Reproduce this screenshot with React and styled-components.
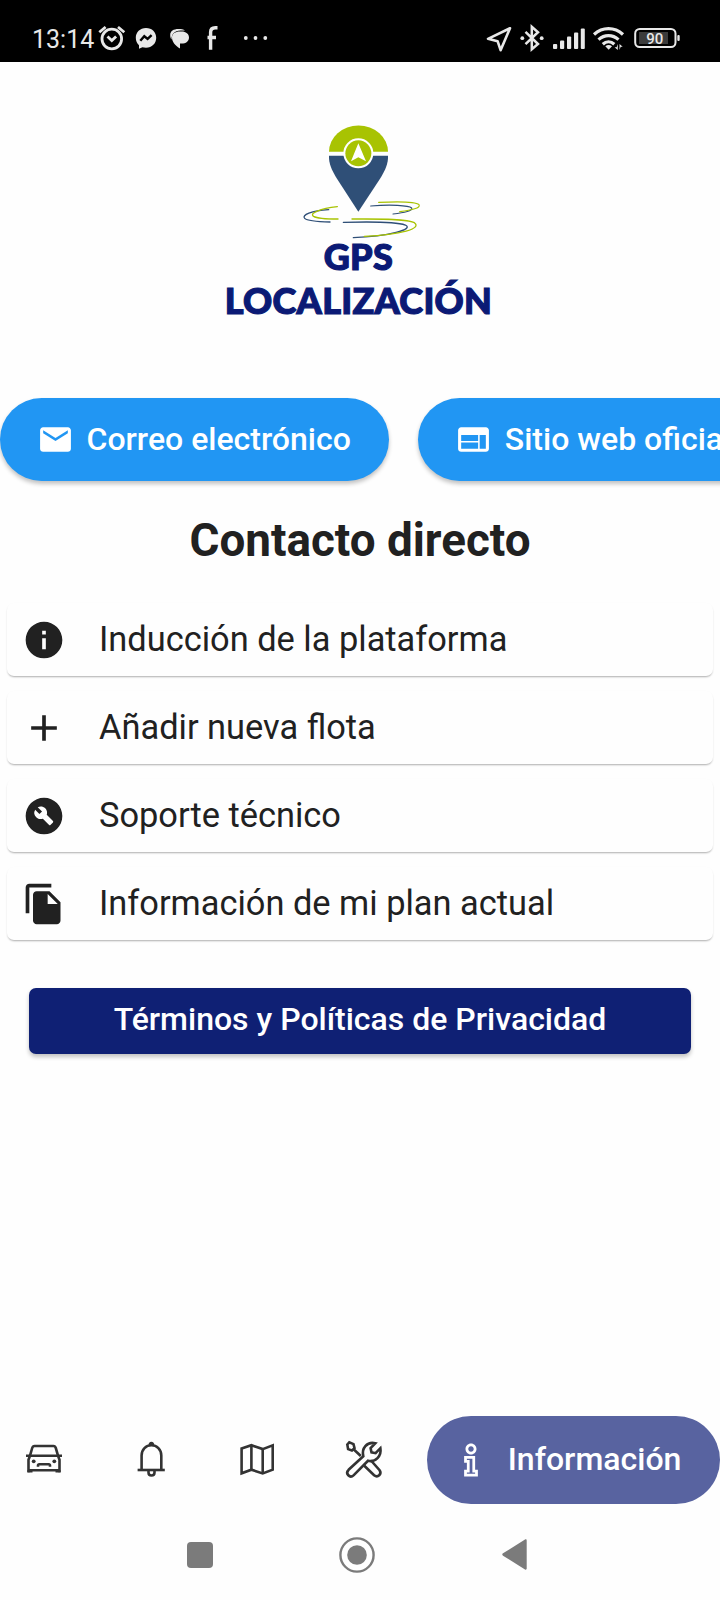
import styled, { createGlobalStyle } from "styled-components";
import {
  MdAdd,
  MdBuildCircle,
  MdEmail,
  MdFileCopy,
  MdInfo,
  MdWeb,
} from "react-icons/md";
import { LiaInfoSolid } from "react-icons/lia";

const colors = {
  background: "#fefefe",
  black: "#212121",
  white: "#fff",
  blue: "#2196f3",
  navy: "#0f2074",
  indigo: "#5863a0",
  logoNavy: "#0b1a75",
  lime: "#a8c302",
  steel: "#2f4f77",
  status: "#e8e8e8",
  gray: "#7b7b7b",
};

const GlobalStyle = createGlobalStyle`
  * {
    box-sizing: border-box;
  }

  body {
    margin: 0;
    background-color: ${colors.background};
    color: ${colors.black};
    font-family: Roboto, "Liberation Sans", sans-serif;
  }

  button {
    border: none;
    font-family: inherit;
    margin: 0;
    padding: 0;
  }

  svg {
    display: block;
    flex-shrink: 0;
  }
`;

const Screen = styled.div`
  display: flex;
  flex-direction: column;
  width: 720px;
  height: 1600px;
  overflow: hidden;
`;

const StatusBar = styled.header`
  background-color: #000;
  color: ${colors.status};
  display: flex;
  align-items: center;
  justify-content: space-between;
  height: 62px;
  padding: 14px 39px 0 32px;
`;

const StatusGroup = styled.div`
  display: flex;
  align-items: center;
`;

const Clock = styled.span`
  font-size: 25px;
  line-height: 28px;
  width: 66px;
  padding-top: 3px;
`;

const Logo = styled.div`
  display: flex;
  flex-direction: column;
  align-items: center;
  height: 336px;
  padding: 62px 3px 0 0;
`;

const LogoText = styled.div`
  color: ${colors.logoNavy};
  font-family: Lato, sans-serif;
  font-size: 36px;
  font-weight: 900;
  letter-spacing: ${(props) => props.$spacing};
  line-height: 44px;
  margin-top: ${(props) => props.$top || "0"};
  -webkit-text-stroke: 1.2px ${colors.logoNavy};
`;

const Links = styled.div`
  display: flex;
  gap: 29px;
  height: 83px;
`;

const LinkButton = styled.button`
  background-color: ${colors.blue};
  border-radius: 42px;
  box-shadow: 0 3px 4px rgba(0, 0, 0, 0.24);
  color: ${colors.white};
  cursor: pointer;
  display: flex;
  align-items: center;
  flex-shrink: 0;
  font-size: 32px;
  font-weight: 500;
  gap: 12.5px;
  height: 83px;
  padding: 0 38.5px 0 37px;
  white-space: nowrap;
`;

// lifts a label onto the optical centre of its icon
const Label = styled.span`
  padding-bottom: 2px;
`;

const Heading = styled.h1`
  font-size: 45.8px;
  font-weight: 700;
  line-height: 54px;
  margin: 33px 0 0;
  text-align: center;
`;

const List = styled.ul`
  display: flex;
  flex-direction: column;
  gap: 15px;
  list-style: none;
  margin: 35px 7px 0;
  padding: 0;
`;

const ListItem = styled.li`
  background-color: ${colors.background};
  border-radius: 7px;
  box-shadow: 0 2px 2px -1px rgba(0, 0, 0, 0.25),
    0 1px 2px rgba(0, 0, 0, 0.08);
  display: flex;
  align-items: center;
  font-size: 34.4px;
  gap: 33px;
  height: 73px;
  padding: 0 15px;
`;

const PrivacyButton = styled.button`
  background-color: ${colors.navy};
  border-radius: 7px;
  box-shadow: 0 3px 4px rgba(0, 0, 0, 0.24);
  color: ${colors.white};
  cursor: pointer;
  font-size: 32px;
  font-weight: 500;
  height: 66px;
  line-height: 63px;
  margin: 48px 29px 0;
  padding-bottom: 3px;
`;

const TabBar = styled.nav`
  display: flex;
  align-items: center;
  height: 88px;
  margin-top: auto;
`;

const Tab = styled.button`
  background-color: ${(props) =>
    props.$active ? colors.indigo : "transparent"};
  border-radius: 44px;
  color: ${(props) => (props.$active ? colors.white : "#333")};
  cursor: pointer;
  display: flex;
  align-items: center;
  font-size: 32px;
  font-weight: 500;
  gap: 15px;
  height: 88px;
  padding-left: 22px;
  width: ${(props) => (props.$active ? "293px" : "106.7px")};
`;

const SystemBar = styled.footer`
  display: flex;
  align-items: center;
  justify-content: space-between;
  height: 96px;
  padding: 5px 193px 0 187px;
`;

function OutlineIcon({ children }) {
  return (
    <svg
      width="44"
      height="44"
      viewBox="0 0 44 44"
      fill="none"
      stroke="currentColor"
      strokeWidth="2.6"
    >
      {children}
    </svg>
  );
}

function CarIcon() {
  return (
    <OutlineIcon>
      <path d="M4 17.700h36" />
      <path d="M8 17.700l2.200-7.700c.4-1.300 1-2 2.300-2h19c1.300 0 1.900.7 2.300 2L36 17.700" />
      <path d="M8 17.700l-1.500 4v12.600M36 17.700l1.500 4v12.600" />
      <path d="M6.500 32.200h31M5.500 33.300h5M33.500 33.300h5" />
      <path d="M16 28.700v-1.200c0-.9.4-1.300 1.300-1.300h9.400c.9 0 1.300.4 1.300 1.300v1.200" />
      <circle cx="11.700" cy="23.300" r="1.900" fill="currentColor" stroke="none" />
      <circle cx="32.300" cy="23.300" r="1.900" fill="currentColor" stroke="none" />
    </OutlineIcon>
  );
}

function BellIcon() {
  return (
    <OutlineIcon>
      <path d="M8.600 32h27.200" />
      <path d="M12.600 32V17.500C12.600 11.500 17 7.300 22.400 7.300s9.900 4.200 9.900 10.200V32" />
      <path d="M19.500 7.500c0-2.500 1-3.700 2.900-3.700s2.900 1.200 2.900 3.700z" fill="currentColor" stroke="none" />
      <path d="M19.500 32v2.500c0 4 6 4 6 0V32" />
    </OutlineIcon>
  );
}

function MapIcon() {
  return (
    <OutlineIcon>
      <path d="M6.600 10.500L16.400 7.200l11.300 3.900L37.700 7.300v24.400l-10 3.700-11.300-3.700-9.800 3.600z" />
      <path d="M16.400 7.200v24.500M27.700 11.100v24.300" />
    </OutlineIcon>
  );
}

function ToolsIcon() {
  return (
    <OutlineIcon>
      <path d="M5.300 6.500l2-2.200 4.200 1.800 1 4-2.600 2.400-3.800-1.400z" />
      <path d="M11.300 11l7.500 7" />
      <path d="M21.300 18.200L6.600 31.800c-3.700 3.800 1.200 9 5.200 5.300L26 22.800c7.500 1.700 13.700-4.600 12.400-12.600l-4.800 5-4.100-.8-.9-4.300 4.700-4.900c-8.500-1.800-14 5-12 13z" />
      <path d="M22.300 27.700l9.800 9.500c3.800 3 8-1.200 5.500-5L29 22.500" />
    </OutlineIcon>
  );
}

const links = [
  { label: "Correo electrónico", Icon: MdEmail },
  { label: "Sitio web oficial", Icon: MdWeb },
];

const contacts = [
  { label: "Inducción de la plataforma", Icon: MdInfo },
  { label: "Añadir nueva flota", Icon: MdAdd },
  { label: "Soporte técnico", Icon: MdBuildCircle },
  { label: "Información de mi plan actual", Icon: MdFileCopy },
];

const tabs = [
  { id: "vehicles", Icon: CarIcon },
  { id: "alerts", Icon: BellIcon },
  { id: "map", Icon: MapIcon },
  { id: "tools", Icon: ToolsIcon },
  { id: "info", Icon: LiaInfoSolid, label: "Información" },
];

function NotificationIcons() {
  return (
    <svg width="172" height="28" viewBox="98 24 172 28" fill={colors.status}>
      {/* alarm */}
      <g fill="none" stroke={colors.status} strokeWidth="2.8">
        <circle cx="111.8" cy="39" r="9.8" />
        <path d="M107.500 36.500l4.300 4 4.300-4" />
        <path d="M99.300 32.300l6.300-5.300M124.300 32.300l-6.300-5.300" />
      </g>
      {/* messenger */}
      <path d="M146 28c-6 0-10.200 4.300-10.200 9.800 0 3 1.200 5.600 3.200 7.400v3.600l3.400-1.500c1.100.3 2.300.5 3.600.5 6 0 10.200-4.400 10.200-10S152 28 146 28z" />
      <path
        d="M140.300 40.800l4-4.600 3.300 2.700 4-3.800"
        fill="none"
        stroke="#000"
        strokeWidth="2.400"
      />
      {/* chat */}
      <path d="M178.500 29c-5 0-8.300 2-8.300 6 0 2 .6 3.600 1.300 4.600 0-6 3-9 9-9.200h4.500c-1.500-1-4-1.400-6.500-1.400z" />
      <path d="M180 31.400h1.500c4.500 0 7.500 2.500 7.500 6s-3 6.200-7.500 6.200h-1.500v5c-4.500-2.500-8-6.500-8-11 0-4 3-6.200 8-6.200z" />
      {/* facebook */}
      <path
        d="M217.500 27.800h-2.200c-3 0-4.700 1.500-4.700 4.500v17.500M207.500 37.500h8.500"
        fill="none"
        stroke={colors.status}
        strokeWidth="3.400"
      />
      <circle cx="245.800" cy="38" r="1.900" />
      <circle cx="255.500" cy="38" r="1.900" />
      <circle cx="265.300" cy="38" r="1.900" />
    </svg>
  );
}

function SystemIcons() {
  return (
    <svg width="196" height="28" viewBox="485 24 196 28" fill={colors.status}>
      {/* location */}
      <path
        d="M510 28.200l-22 10.600 9.600 2.400 3 9z"
        fill="none"
        stroke={colors.status}
        strokeWidth="2.600"
        strokeLinejoin="round"
      />
      {/* bluetooth */}
      <path
        d="M525.500 31.800l12.500 12.200-6.200 5.300V26.800l6.200 5.400-12.500 12"
        fill="none"
        stroke={colors.status}
        strokeWidth="2.500"
      />
      <circle cx="522.300" cy="38.200" r="1.900" />
      <circle cx="541.700" cy="38.200" r="1.900" />
      {/* signal */}
      <rect x="553" y="44" width="4.200" height="5" rx="1" />
      <rect x="560" y="40.500" width="4.200" height="8.500" rx="1" />
      <rect x="567" y="36.500" width="4.200" height="12.500" rx="1" />
      <rect x="574" y="32.500" width="4.200" height="16.500" rx="1" />
      <rect x="580.800" y="28.500" width="4" height="20.500" rx="1" />
      {/* wifi */}
      <g fill="none" stroke={colors.status} strokeWidth="3.200">
        <path d="M594 34.500c8.500-7.800 20.500-7.800 29 0" />
        <path d="M598.500 39.600c6-5.400 14-5.400 20 0" />
        <path d="M602.800 44.200c3.500-3.200 8-3.200 11.500 0" />
      </g>
      <path d="M605.300 46.200c2-1.600 4.700-1.600 6.700 0l-3.300 3.600z" />
      <path d="M617.800 44v6l-3.200-2.800h2zM619.500 50v-6l3.200 2.800h-2z" />
      {/* battery */}
      <rect
        x="635.200"
        y="29"
        width="40.300"
        height="18"
        rx="4.500"
        fill="none"
        stroke={colors.status}
        strokeWidth="2"
      />
      <rect x="639" y="32" width="29" height="12" fill="#3b3b3b" />
      <rect x="677.300" y="35" width="2.400" height="6" rx="1" />
      <text
        x="654.700"
        y="43.500"
        fontFamily="Roboto, sans-serif"
        fontSize="15"
        fontWeight="500"
        textAnchor="middle"
      >
        90
      </text>
    </svg>
  );
}

function Pin() {
  return (
    <svg width="126.700" height="116.700" viewBox="255 40 380 350">
      <path d="M357 123a88 78 0 0 1 177 0z" fill={colors.lime} />
      <path
        d="M357 135h177c1 24-9 44-22 66l-67 102-66-102c-13-22-23-42-22-66z"
        fill={colors.steel}
      />
      <circle cx="445" cy="128" r="45" fill="#fff" />
      <circle cx="445" cy="128" r="39" fill={colors.lime} />
      <path d="M445 98l23 54-23-12-22 12z" fill="#fff" />
      <g fill="none" strokeWidth="4" strokeLinecap="round">
        <path
          d="M356 297c-52 3-82 16-72 26 8 8 38 10 76 11"
          stroke={colors.steel}
        />
        <path
          d="M382 288c-50 6-86 19-71 29 8 5 36 8 73 8"
          stroke={colors.lime}
        />
        <path
          d="M482 286c60-5 114-2 123 6 5 8-22 14-56 18"
          stroke={colors.steel}
          strokeWidth="3.500"
        />
        <path
          d="M506 275c62-3 112-1 121 7 6 10-22 16-58 21"
          stroke={colors.lime}
          strokeWidth="3.500"
        />
        <path
          d="M400 335c70-2 160-1 186 8 28 13-50 34-156 38"
          stroke={colors.steel}
        />
        <path
          d="M426 325c70 0 164-2 187 11 24 18-40 36-150 41"
          stroke={colors.lime}
        />
      </g>
    </svg>
  );
}

function App() {
  return (
    <>
      <GlobalStyle />
      <Screen>
        <StatusBar>
          <StatusGroup>
            <Clock>13:14</Clock>
            <NotificationIcons />
          </StatusGroup>
          <SystemIcons />
        </StatusBar>
        <Logo>
          <Pin />
          <LogoText $spacing="0.4px" $top="-7px">
            GPS
          </LogoText>
          <LogoText $spacing="0.3px">LOCALIZACIÓN</LogoText>
        </Logo>
        <Links>
          {links.map(({ label, Icon }) => (
            <LinkButton key={label}>
              <Icon size={37} />
              <Label>{label}</Label>
            </LinkButton>
          ))}
        </Links>
        <Heading>Contacto directo</Heading>
        <List>
          {contacts.map(({ label, Icon }) => (
            <ListItem key={label}>
              <Icon size={44} />
              <Label>{label}</Label>
            </ListItem>
          ))}
        </List>
        <PrivacyButton>Términos y Políticas de Privacidad</PrivacyButton>
        <TabBar>
          {tabs.map(({ id, Icon, label }) => (
            <Tab key={id} $active={Boolean(label)}>
              <Icon size={44} />
              {label && <Label>{label}</Label>}
            </Tab>
          ))}
        </TabBar>
        <SystemBar>
          <svg width="26" height="26" viewBox="0 0 26 26" fill={colors.gray}>
            <rect width="26" height="26" rx="4" />
          </svg>
          <svg width="37" height="36" viewBox="0 0 37 36" fill={colors.gray}>
            <circle
              cx="18"
              cy="18"
              r="16.600"
              fill="none"
              stroke={colors.gray}
              strokeWidth="2.400"
            />
            <circle cx="18" cy="18" r="9.800" />
          </svg>
          <svg width="25" height="31" viewBox="0 0 25 31" fill={colors.gray}>
            <path d="M1 14.300L23 .5c1-.5 1.700 0 1.700 1v28c0 1-.7 1.500-1.700 1L1 16.700c-1-.8-1-1.600 0-2.400z" />
          </svg>
        </SystemBar>
      </Screen>
    </>
  );
}

export default App;
